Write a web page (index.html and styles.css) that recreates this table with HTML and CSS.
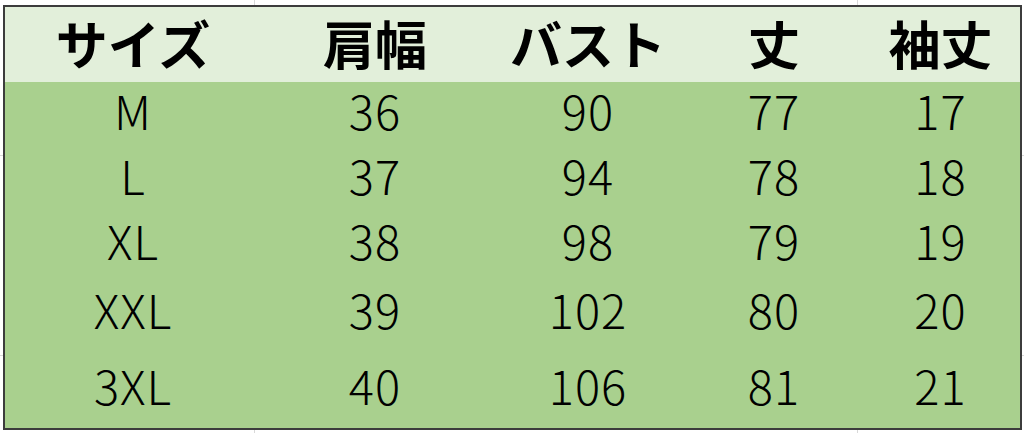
FILE: index.html
```html
<!DOCTYPE html>
<html lang="ja">
<head>
<meta charset="utf-8">
<title>サイズ表</title>
<link rel="stylesheet" href="styles.css">
</head>
<body>
<div class="sheet">
  <div class="table">
    <div class="row head">
      <div class="cell">サイズ</div>
      <div class="cell">肩幅</div>
      <div class="cell">バスト</div>
      <div class="cell">丈</div>
      <div class="cell">袖丈</div>
    </div>
    <div class="body">
      <div class="row r1">
        <div class="cell">M</div><div class="cell">36</div><div class="cell">90</div><div class="cell">77</div><div class="cell">17</div>
      </div>
      <div class="row r2">
        <div class="cell">L</div><div class="cell">37</div><div class="cell">94</div><div class="cell">78</div><div class="cell">18</div>
      </div>
      <div class="row r3">
        <div class="cell">XL</div><div class="cell">38</div><div class="cell">98</div><div class="cell">79</div><div class="cell">19</div>
      </div>
      <div class="row r4">
        <div class="cell">XXL</div><div class="cell">39</div><div class="cell">102</div><div class="cell">80</div><div class="cell">20</div>
      </div>
      <div class="row r5">
        <div class="cell">3XL</div><div class="cell">40</div><div class="cell">106</div><div class="cell">81</div><div class="cell">21</div>
      </div>
    </div>
  </div>
</div>
</body>
</html>
```

FILE: styles.css
```css
html, body {
  margin: 0;
  padding: 0;
  background: #ffffff;
}

.sheet {
  width: 1024px;
  height: 433px;
  box-sizing: border-box;
  padding: 5px 0 0 3px;
  background-color: #ffffff;
  background-image:
    linear-gradient(#d9d9d9, #d9d9d9),
    linear-gradient(#d9d9d9, #d9d9d9),
    linear-gradient(#d9d9d9, #d9d9d9),
    linear-gradient(#d9d9d9, #d9d9d9);
  background-repeat: no-repeat;
  background-size: 1px 433px, 1px 433px, 1024px 1px, 1024px 1px;
  background-position: 254px 0, 857px 0, 0 155px, 0 355px;
  overflow: hidden;
}

.table {
  width: 1019px;
  height: 425px;
  box-sizing: border-box;
  border: 2px solid #3c3c3c;
  display: flex;
  flex-direction: column;
  background: #a9d08e;
  font-family: "Noto Sans CJK JP", "Noto Sans", sans-serif;
  color: #000;
}

.row {
  display: grid;
  grid-template-columns: 256px 228px 198px 174px 1fr;
  align-items: center;
  justify-items: center;
}

.head {
  height: 75px;
  background: #e2efda;
  font-size: 52px;
  font-weight: 700;
  line-height: 1;
}

.head .cell {
  padding-bottom: 4px;
}

.body {
  flex: 1;
  display: flex;
  flex-direction: column;
  font-size: 47px;
  font-weight: 300;
  line-height: 1;
  letter-spacing: 1px;
}

.body .cell {
  padding-bottom: 10px;
}

.r1 { height: 65px; }
.r2 { height: 65px; }
.r3 { height: 65px; }
.r4 { height: 73px; }
.r5 { height: 78px; }

.cell {
  white-space: nowrap;
}
```
